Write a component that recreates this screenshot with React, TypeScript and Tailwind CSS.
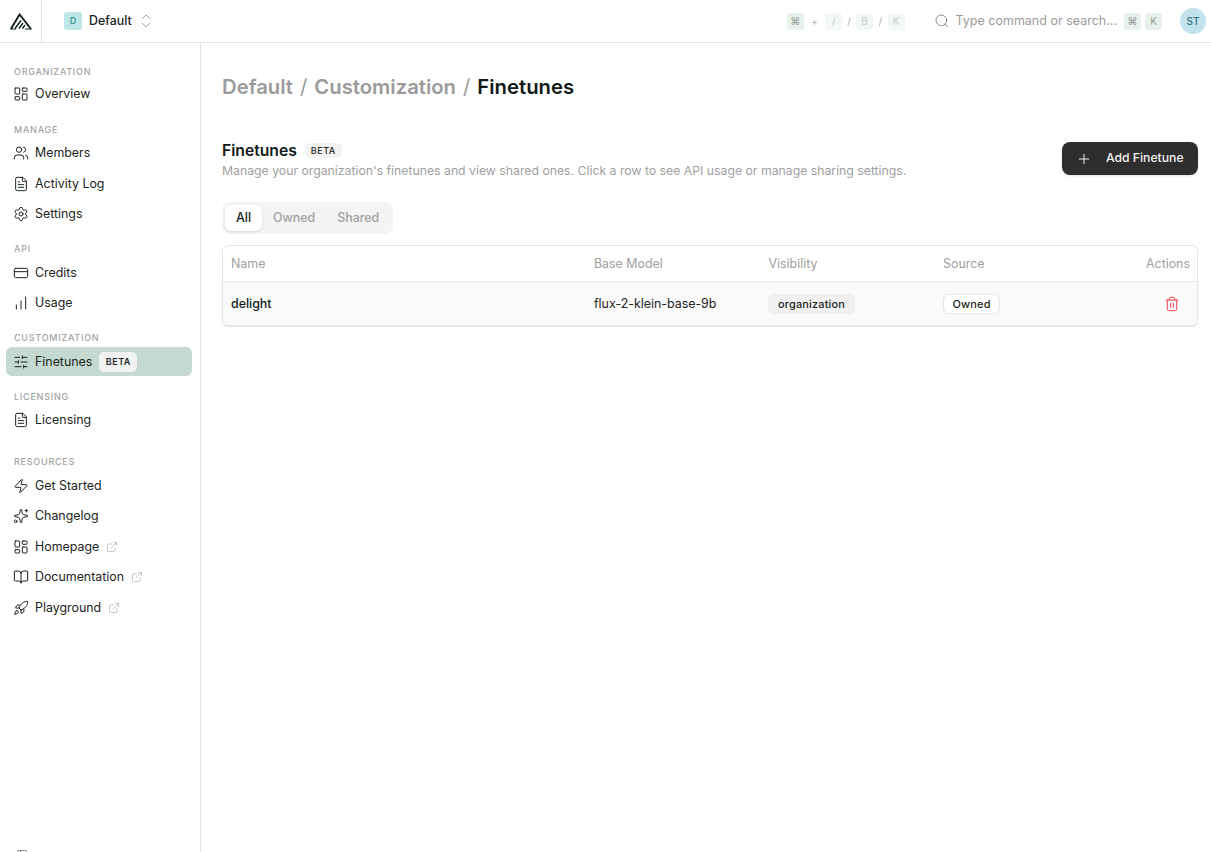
import React from 'react'
import {
  BookOpen, ChartNoAxesColumnIncreasing, ChevronsUpDown, CreditCard, ExternalLink, FileText,
  LayoutDashboard, PanelLeft, Plus, Rocket, Search, Settings, SlidersHorizontal, Sparkles,
  Trash2, Users, Zap,
} from 'lucide-react'

const sections: any[] = [
  { label: 'ORGANIZATION', gap: 'mb-[14px]', items: [{ icon: LayoutDashboard, name: 'Overview' }] },
  {
    label: 'MANAGE', gap: 'mb-[13.5px]', items: [
      { icon: Users, name: 'Members' },
      { icon: FileText, name: 'Activity Log' },
      { icon: Settings, name: 'Settings' },
    ],
  },
  {
    label: 'API', gap: 'mb-[13.5px]', items: [
      { icon: CreditCard, name: 'Credits' },
      { icon: ChartNoAxesColumnIncreasing, name: 'Usage' },
    ],
  },
  { label: 'CUSTOMIZATION', gap: 'mb-[13.5px]', items: [{ icon: SlidersHorizontal, name: 'Finetunes', active: true }] },
  { label: 'LICENSING', gap: 'mb-[20.5px]', items: [{ icon: FileText, name: 'Licensing' }] },
  {
    label: 'RESOURCES', gap: '', items: [
      { icon: Zap, name: 'Get Started' },
      { icon: Sparkles, name: 'Changelog' },
      { icon: LayoutDashboard, name: 'Homepage', ext: true },
      { icon: BookOpen, name: 'Documentation', ext: true },
      { icon: Rocket, name: 'Playground', ext: true },
    ],
  },
]

const Logo = () => (
  <svg width="22" height="17" viewBox="0 0 22 17" fill="none" stroke="#10201a">
    <path d="M0.8 16 L9.6 1.5 L21 16" strokeWidth="1.9" />
    <path d="M0.5 16 H6 M15 16 H21.5" strokeWidth="1.2" />
    <path d="M5 15.5 L11 7.5 M9 15.5 L13 10 M12.5 15.5 L15 12" strokeWidth="1.4" />
  </svg>
)

const Key = ({ children, light }: any) => (
  <span className={`flex h-[17px] w-[17px] items-center justify-center rounded-[3px] text-[10px] ${light ? 'bg-[#f3f7f5] text-[#c4ccc8]' : 'bg-[#e9f1ed] text-[#8f9894]'}`}>
    {children}
  </span>
)

const SideItem = ({ item }: any) => {
  const Icon = item.icon
  return (
    <div className="flex h-[30.5px] items-center">
      <div className={`flex h-[29px] w-full items-center rounded-md pl-[6.5px] ${item.active ? 'bg-[#c4d9cf]' : ''}`}>
        <Icon size={16} strokeWidth={1.5} className="shrink-0 text-[#1c2421]" />
        <span className="ml-[6.5px] pt-px text-[12.4px] text-[#1c2421]">{item.name}</span>
        {item.ext && <ExternalLink size={12} strokeWidth={1.25} className="ml-[7px] text-[#a8a8a8]" />}
        {item.active && (
          <span className="ml-[7px] rounded-[5px] bg-[#f1f3f2] px-[6.5px] py-[3px] text-[9px] leading-[14px] font-semibold tracking-[0.5px] text-[#1c2421]">BETA</span>
        )}
      </div>
    </div>
  )
}

export default function App() {
  return (
    <div className="flex h-[852px] w-[1211px] flex-col overflow-hidden bg-white text-[#101a16]" style={{ fontFamily: 'Inter, sans-serif' }}>
      <header className="flex h-[43px] shrink-0 items-center border-b border-[#e5e5e5]">
        <div className="flex h-full w-[42px] items-center justify-center border-r border-[#e5e5e5]">
          <Logo />
        </div>
        <div className="ml-[22px] flex items-center">
          <span className="flex h-[18px] w-[18px] items-center justify-center rounded-[3px] bg-[#bfe6e6] text-[9px] font-medium text-[#2f8f8f]">D</span>
          <span className="ml-[7px] text-[12.4px] font-medium text-[#1c2421]">Default</span>
          <ChevronsUpDown size={18} strokeWidth={1} className="ml-[5px] text-[#8a8a8a]" />
        </div>
        <div className="ml-auto flex items-center text-[10px] text-[#b0b0b0]">
          <Key>⌘</Key>
          <span className="mx-[7.5px]">+</span>
          <Key light>/</Key>
          <span className="mx-[5px]">/</span>
          <Key light>B</Key>
          <span className="mx-[5.5px]">/</span>
          <Key light>K</Key>
        </div>
        <div className="ml-[29px] flex items-center">
          <Search size={16} strokeWidth={1.25} className="text-[#767676]" />
          <span className="ml-[6px] text-[12.5px] text-[#9b9b9b]">Type command or search...</span>
          <span className="ml-[7px] flex gap-1">
            <Key>⌘</Key>
            <Key>K</Key>
          </span>
        </div>
        <div className="mr-[5px] ml-[18px] flex h-[26px] w-[26px] items-center justify-center rounded-full bg-[#c2e2ec] text-[10px] font-medium text-[#2f6f80]">ST</div>
      </header>

      <div className="flex min-h-0 flex-1">
        <aside className="flex w-[201px] shrink-0 flex-col border-r border-[#e5e5e5] pt-[22px] pr-2 pl-[6px]">
          <nav className="flex-1">
            {sections.map((s: any, i: number) => (
              <div key={s.label} className={s.gap}>
                <div className={`flex items-start pl-2 text-[9px] font-medium tracking-[0.75px] text-[#a3a3a3] ${i === 0 ? 'h-[14px] leading-[14px]' : 'h-[14.5px] leading-[12px]'}`}>{s.label}</div>
                {s.items.map((item: any) => <SideItem key={item.name} item={item} />)}
              </div>
            ))}
          </nav>
          <div className="h-[3px] overflow-hidden pl-[10px]">
            <PanelLeft size={12} strokeWidth={1.25} className="text-[#555]" />
          </div>
        </aside>

        <main className="min-w-0 flex-1 pt-[29px] pr-[13px] pl-[21px]">
          <h1 className="flex h-[30px] items-center gap-[7px] text-[20.3px] font-semibold">
            <span className="text-[#9b9b9b]">Default</span>
            <span className="font-normal text-[#9b9b9b]">/</span>
            <span className="text-[#9b9b9b]">Customization</span>
            <span className="font-normal text-[#9b9b9b]">/</span>
            <span className="text-[#101a16]">Finetunes</span>
          </h1>

          <div className="mt-[38px] flex items-start justify-between">
            <div>
              <div className="flex h-[20px] items-center">
                <h2 className="pt-px text-[15.7px] font-semibold text-[#101a16]">Finetunes</h2>
                <span className="ml-2 rounded-[5px] bg-[#f3f3f3] px-[6px] text-[9px] leading-[15px] font-medium tracking-[0.5px] text-[#1c2421]">BETA</span>
              </div>
              <p className="mt-[2px] text-[12.25px] leading-[18px] text-[#a0a0a0]">
                Manage your organization's finetunes and view shared ones. Click a row to see API usage or manage sharing settings.
              </p>
            </div>
            <button className="mt-[2px] flex h-[33px] w-[136px] items-center rounded-lg bg-[#2e2e2e] pl-[14px] text-[12.2px] font-medium text-[#f2f2f2] shadow-sm">
              <Plus size={16} strokeWidth={1.5} />
              <span className="ml-[14px]">Add Finetune</span>
            </button>
          </div>

          <div className="mt-[22px] flex h-[32px] w-[171px] items-center rounded-lg bg-[#f4f4f4] px-[3px] text-[12.4px] font-medium">
            <span className="flex h-[26px] w-[37px] items-center justify-center rounded-md bg-white text-[#101a16] shadow-sm">All</span>
            <span className="ml-[11px] text-[#a0a0a0]">Owned</span>
            <span className="ml-[22px] text-[#a0a0a0]">Shared</span>
          </div>

          <div className="mt-[11px] overflow-hidden rounded-md border border-b-2 border-[#e5e5e5] text-[12.4px]">
            <div className="grid h-[36px] grid-cols-[363px_174.5px_174.5px_1fr_44px] items-center border-b border-[#e5e5e5] pt-px pr-[7px] pl-2 text-[#a0a0a0]">
              <span>Name</span>
              <span>Base Model</span>
              <span>Visibility</span>
              <span>Source</span>
              <span className="whitespace-nowrap">Actions</span>
            </div>
            <div className="grid h-[43px] grid-cols-[363px_174.5px_174.5px_1fr_44px] items-center bg-[#fafafa] pr-[7px] pl-2">
              <span className="pt-[2px] font-medium text-[#101a16]">delight</span>
              <span className="pt-[2px] text-[#1c2421]">flux-2-klein-base-9b</span>
              <span>
                <span className="-ml-[0.5px] inline-block rounded-md bg-[#f0f0f0] px-[10px] text-[10.9px] leading-[20px] font-medium tracking-[0.2px] text-[#1c2421]">organization</span>
              </span>
              <span>
                <span className="inline-block rounded-md border border-[#e5e5e5] bg-white px-[8.5px] text-[10.9px] leading-[18px] font-medium tracking-[0.2px] text-[#1c2421]">Owned</span>
              </span>
              <span className="flex justify-end pr-[10px]">
                <Trash2 size={16} strokeWidth={1.5} className="text-[#f0444c]" />
              </span>
            </div>
          </div>
        </main>
      </div>
    </div>
  )
}
